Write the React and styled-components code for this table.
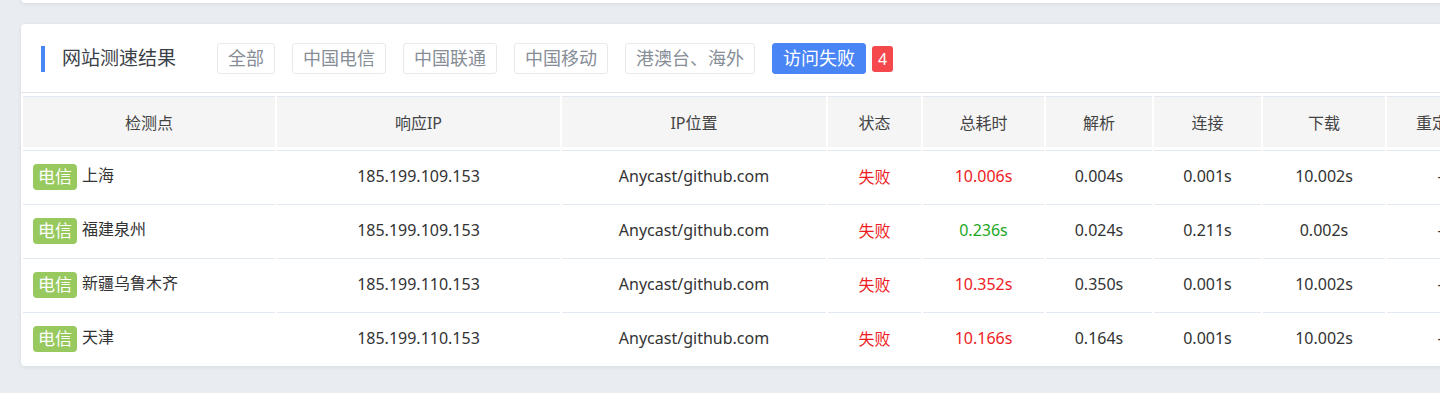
import React from 'react'
import styled, { createGlobalStyle } from 'styled-components'

const GlobalStyle = createGlobalStyle`
  html, body {
    margin: 0;
    padding: 0;
    background: #e9ecf0;
    overflow: hidden;
  }
  body {
    font-family: 'Noto Sans', 'Noto Sans CJK SC', sans-serif;
    color: #333;
  }
`

const filters = ['全部', '中国电信', '中国联通', '中国移动', '港澳台、海外']

const columns = [
  { label: '检测点', width: 252 },
  { label: '响应IP', width: 283 },
  { label: 'IP位置', width: 264 },
  { label: '状态', width: 93 },
  { label: '总耗时', width: 121 },
  { label: '解析', width: 106 },
  { label: '连接', width: 107 },
  { label: '下载', width: 122 },
  { label: '重定向', width: 106 },
  { label: '页面大小', width: 120 },
]

const rows = [
  { isp: '电信', city: '上海', ip: '185.199.109.153', total: '10.006s', ok: false, dns: '0.004s', conn: '0.001s', down: '10.002s' },
  { isp: '电信', city: '福建泉州', ip: '185.199.109.153', total: '0.236s', ok: true, dns: '0.024s', conn: '0.211s', down: '0.002s' },
  { isp: '电信', city: '新疆乌鲁木齐', ip: '185.199.110.153', total: '10.352s', ok: false, dns: '0.350s', conn: '0.001s', down: '10.002s' },
  { isp: '电信', city: '天津', ip: '185.199.110.153', total: '10.166s', ok: false, dns: '0.164s', conn: '0.001s', down: '10.002s' },
]

const App = () => {
  return (
    <Page>
      <GlobalStyle />
      <TopCard />
      <Card>
        <Header>
          <Title>网站测速结果</Title>
          <Filters>
            {filters.map((f) => (
              <FilterBtn key={f} type='button'>
                {f}
              </FilterBtn>
            ))}
            <FilterBtn type='button' $active>
              访问失败
            </FilterBtn>
            <Badge>4</Badge>
          </Filters>
        </Header>
        <Table>
          <colgroup>
            {columns.map((c) => (
              <col key={c.label} style={{ width: c.width }} />
            ))}
          </colgroup>
          <thead>
            <tr>
              {columns.map((c) => (
                <Th key={c.label}>{c.label}</Th>
              ))}
            </tr>
          </thead>
          <tbody>
            {rows.map((r, i) => (
              <tr key={i}>
                <Td $left>
                  <Tag>{r.isp}</Tag>
                  {r.city}
                </Td>
                <Td>{r.ip}</Td>
                <Td>Anycast/github.com</Td>
                <Td $color='#ee1c24'>失败</Td>
                <Td $color={r.ok ? '#1fa81f' : '#ee1c24'}>{r.total}</Td>
                <Td>{r.dns}</Td>
                <Td>{r.conn}</Td>
                <Td>{r.down}</Td>
                <Td>-</Td>
                <Td>-</Td>
              </tr>
            ))}
          </tbody>
        </Table>
      </Card>
    </Page>
  )
}

const Page = styled.div`
  padding: 0 0 40px 21px;
  width: 1900px;
`

const TopCard = styled.div`
  height: 60px;
  margin-top: -57px;
  background: #fff;
  border-radius: 4px;
  box-shadow: 0 1px 4px rgba(0, 0, 0, 0.08);
`

const Card = styled.section`
  margin-top: 21px;
  background: #fff;
  border-radius: 4px;
  box-shadow: 0 1px 4px rgba(0, 0, 0, 0.08);
  overflow: hidden;
`

const Header = styled.div`
  display: flex;
  align-items: center;
  padding: 19px 20px 18px;
  border-bottom: 1px solid #dfe4ea;
`

const Title = styled.h2`
  display: flex;
  align-items: center;
  gap: 17px;
  margin: 0 41px 0 0;
  font-size: 19px;
  font-weight: 400;
  color: #3b4148;
  line-height: 31px;
  &::before {
    content: '';
    width: 4px;
    height: 26px;
    background: #4a85f6;
  }
`

const Filters = styled.div`
  display: flex;
  align-items: center;
  gap: 17px;
`

const FilterBtn = styled.button`
  height: 31px;
  padding: 0 10px;
  font-family: inherit;
  font-size: 18px;
  line-height: 29px;
  border-radius: 3px;
  border: 1px solid ${(p) => (p.$active ? '#4a85f6' : '#e6e9ee')};
  background: ${(p) => (p.$active ? '#4a85f6' : '#fff')};
  color: ${(p) => (p.$active ? '#fff' : '#878e97')};
`

const Badge = styled.span`
  margin-left: -11px;
  width: 21px;
  height: 26px;
  border-radius: 3px;
  background: #f5484d;
  color: #fff;
  font-size: 16px;
  display: flex;
  align-items: center;
  justify-content: center;
`

const Table = styled.table`
  table-layout: fixed;
  border-collapse: separate;
  border-spacing: 2px 3px;
`

const Th = styled.th`
  height: 50px;
  padding: 0;
  border-top: 1px solid #e3e9f0;
  background: #f5f5f6;
  font-size: 16px;
  font-weight: 400;
  color: #444;
  text-align: center;
`

const Td = styled.td`
  height: 50px;
  padding: 0 ${(p) => (p.$left ? '10px' : '0')};
  border-top: 1px solid #e3e9f0;
  font-size: 16px;
  color: ${(p) => p.$color || '#333'};
  text-align: ${(p) => (p.$left ? 'left' : 'center')};
  white-space: nowrap;
`

const Tag = styled.span`
  display: inline-block;
  margin-right: 5px;
  padding: 0 5px;
  height: 26px;
  line-height: 26px;
  border-radius: 4px;
  background: #97c95f;
  color: #fff;
  font-size: 17px;
  vertical-align: middle;
`

export default App
